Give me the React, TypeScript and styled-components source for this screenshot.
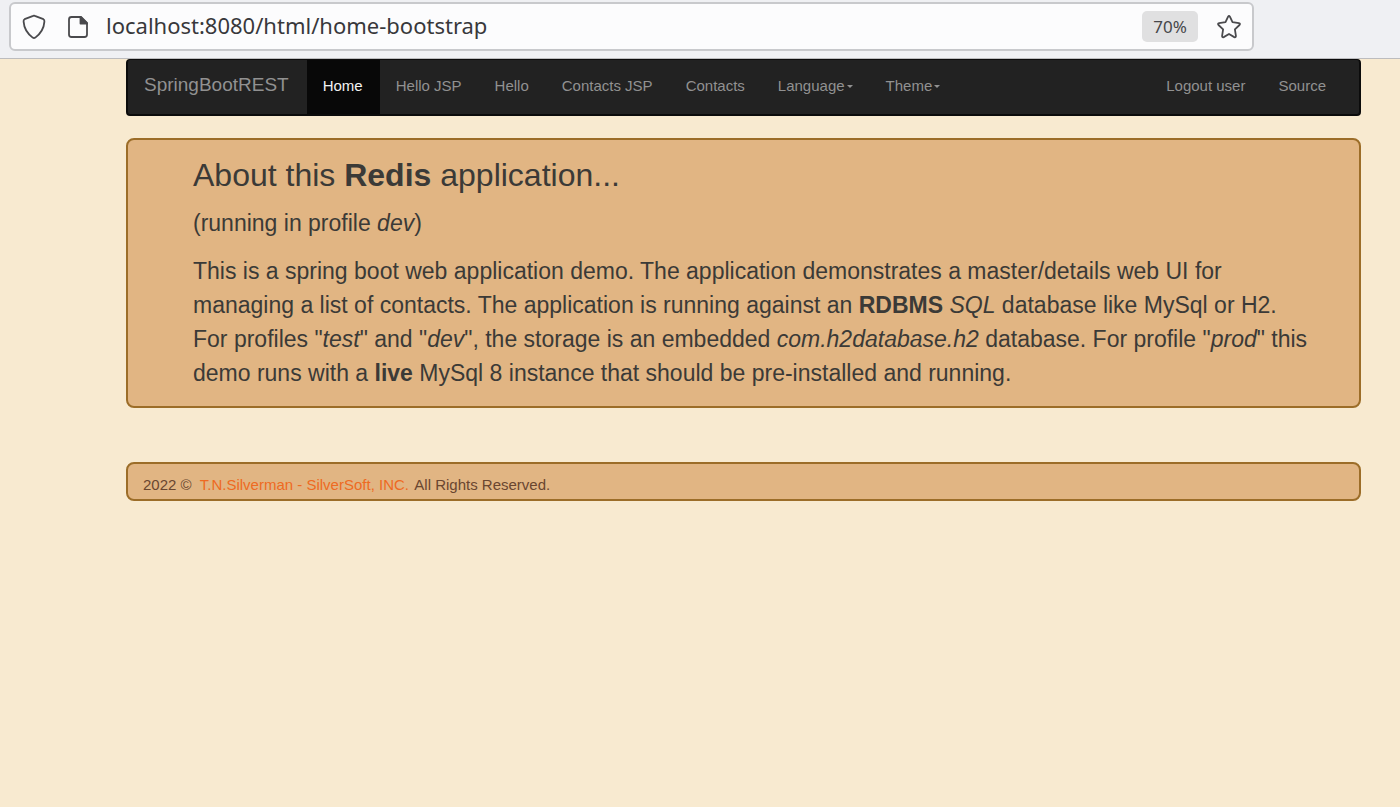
import React from "react";
import styled, { createGlobalStyle } from "styled-components";

const GlobalStyle = createGlobalStyle`
  *, *::before, *::after { box-sizing: border-box; }
  body {
    margin: 0;
    background: #f8ead0;
    color: #3b3a37;
    font-family: "Liberation Sans", Arial, sans-serif;
  }
`;

const Toolbar = styled.div`
  padding: 2px 146px 7px 9px;
  background: #eff0f3;
  border-bottom: 1px solid #bcbcbe;
`;

const AddressBar = styled.div`
  display: flex;
  align-items: center;
  height: 49px;
  padding: 0 9px;
  border: 2px solid #c8c9cc;
  border-radius: 6px;
  background: #fcfcfd;
`;

const IconButton = styled.button`
  display: flex;
  flex: none;
  width: 28px;
  height: 28px;
  padding: 0;
  border: 0;
  background: none;
  color: #4a4a4d;

  & + & { margin-left: 16px; }
`;

const AddressInput = styled.input`
  flex: 1;
  min-width: 0;
  height: 36px;
  margin: 0 14px;
  padding: 0 0 4px;
  border: 0;
  outline: 0;
  background: transparent;
  color: #38383b;
  font: 22px/32px "Noto Sans", sans-serif;
`;

const ZoomButton = styled.button`
  flex: none;
  width: 56px;
  height: 31px;
  margin-right: 17px;
  padding: 0;
  border: 0;
  border-radius: 5px;
  background: #e0e0e1;
  color: #47474a;
  font: 17px/31px "Noto Sans", sans-serif;
`;

const Container = styled.div`
  padding: 0 39px 0 126px;
`;

const Navbar = styled.nav`
  display: flex;
  padding-right: 16px;
  border: 2px solid #0b0b0b;
  border-top-width: 1px;
  border-radius: 4px;
  background: #222;
`;

const Brand = styled.a`
  padding: 0 18px 0 16px;
  color: #919191;
  font-size: 19px;
  line-height: 50px;
  text-decoration: none;
`;

const NavList = styled.ul<{ $end?: boolean }>`
  display: flex;
  margin: 0 0 0 ${(p) => (p.$end ? "auto" : "0")};
  padding: 0;
  list-style: none;
`;

const NavLink = styled.a<{ $active?: boolean }>`
  display: flex;
  align-items: center;
  height: 54px;
  padding: 0 17px 4px 16px;
  background: ${(p) => (p.$active ? "#080808" : "transparent")};
  color: ${(p) => (p.$active ? "#f2f2f2" : "#919191")};
  font-size: 15px;
  text-decoration: none;
  white-space: nowrap;
`;

const Caret = styled.span`
  margin: 2px 0 0 2px;
  border: 3px solid transparent;
  border-top-color: currentColor;
  border-bottom: 0;
`;

const Panel = styled.main`
  margin-top: 22px;
  padding: 16px 47px 16px 65px;
  border: 2px solid #9c6d28;
  border-radius: 8px;
  background: #e1b583;
`;

const Title = styled.h1`
  margin: 0 0 12px;
  font-size: 32px;
  font-weight: 400;
  line-height: 38px;
`;

const Text = styled.p`
  margin: 0;
  font-size: 23px;
  line-height: 34px;

  & + & { margin-top: 14px; }
`;

const Footer = styled.footer`
  margin-top: 54px;
  padding: 6px 15px 0;
  border: 2px solid #9c6d28;
  border-radius: 8px;
  background: #e1b583;
  color: #6a4630;
  font-size: 15px;
  line-height: 29px;
`;

const OwnerLink = styled.a`
  margin: 0 2px 0 4px;
  color: #ee6a22;
  text-decoration: none;
`;

const line = {
  width: 28,
  height: 28,
  viewBox: "0 0 28 28",
  fill: "none",
  stroke: "currentColor",
  strokeWidth: 1.8,
  strokeLinejoin: "round" as const,
  "aria-hidden": true,
};

const ShieldIcon = () => (
  <svg {...line}>
    <path d="M13.2 2.900Q14 2.500 14.800 2.900L23.400 6.200Q24.600 6.800 24.400 8.600C24 14.500 20.700 20.500 15.300 24.600Q14 25.500 12.700 24.600C7.300 20.500 4 14.500 3.600 8.600Q3.400 6.800 4.600 6.200Z" />
  </svg>
);

const PageIcon = () => (
  <svg {...line}>
    <path d="M7.500 4H17L23 10V21.500Q23 24 20.500 24H7.500Q5 24 5 21.500V6.500Q5 4 7.500 4Z" />
    <path d="M16.500 4V10.500H23Z" fill="currentColor" />
  </svg>
);

const StarIcon = () => (
  <svg {...line}>
    <path d="M13.100 3.700Q14 2.300 14.900 3.700L17.500 9.100 23.900 10.100Q25.700 10.500 24.500 12L19.900 16.400 20.900 22.800Q21 24.700 19.300 24.100L14 21 8.700 24.100Q7 24.700 7.100 22.800L8.100 16.400 3.500 12Q2.300 10.500 4.100 10.100L10.500 9.100Z" />
  </svg>
);

const links = [
  { label: "Home", active: true },
  { label: "Hello JSP" },
  { label: "Hello" },
  { label: "Contacts JSP" },
  { label: "Contacts" },
  { label: "Language", menu: true },
  { label: "Theme", menu: true },
];

export default function App() {
  return (
    <>
      <GlobalStyle />
      <Toolbar>
        <AddressBar>
          <IconButton aria-label="Tracking protection"><ShieldIcon /></IconButton>
          <IconButton aria-label="Site information"><PageIcon /></IconButton>
          <AddressInput aria-label="Address" defaultValue="localhost:8080/html/home-bootstrap" />
          <ZoomButton>70%</ZoomButton>
          <IconButton aria-label="Bookmark this page"><StarIcon /></IconButton>
        </AddressBar>
      </Toolbar>
      <Container>
        <Navbar>
          <Brand href="#">SpringBootREST</Brand>
          <NavList>
            {links.map(({ label, active, menu }) => (
              <li key={label}>
                <NavLink href="#" $active={active} aria-current={active ? "page" : undefined}>
                  {label}
                  {menu && <Caret />}
                </NavLink>
              </li>
            ))}
          </NavList>
          <NavList $end>
            <li><NavLink href="#">Logout user</NavLink></li>
            <li><NavLink href="#">Source</NavLink></li>
          </NavList>
        </Navbar>
        <Panel>
          <Title>About this <b>Redis</b> application...</Title>
          <Text>(running in profile <em>dev</em>)</Text>
          <Text>
            This is a spring boot web application demo. The application demonstrates a
            master/details web UI for managing a list of contacts. The application is running
            against an <b>RDBMS</b> <em>SQL</em> database like MySql or H2. For profiles
            "<em>test</em>" and "<em>dev</em>", the storage is an embedded{" "}
            <em>com.h2database.h2</em> database. For profile "<em>prod</em>" this demo runs with
            a <b>live</b> MySql 8 instance that should be pre-installed and running.
          </Text>
        </Panel>
        <Footer>
          2022 © <OwnerLink href="#">T.N.Silverman - SilverSoft, INC.</OwnerLink> All Rights
          Reserved.
        </Footer>
      </Container>
    </>
  );
}
